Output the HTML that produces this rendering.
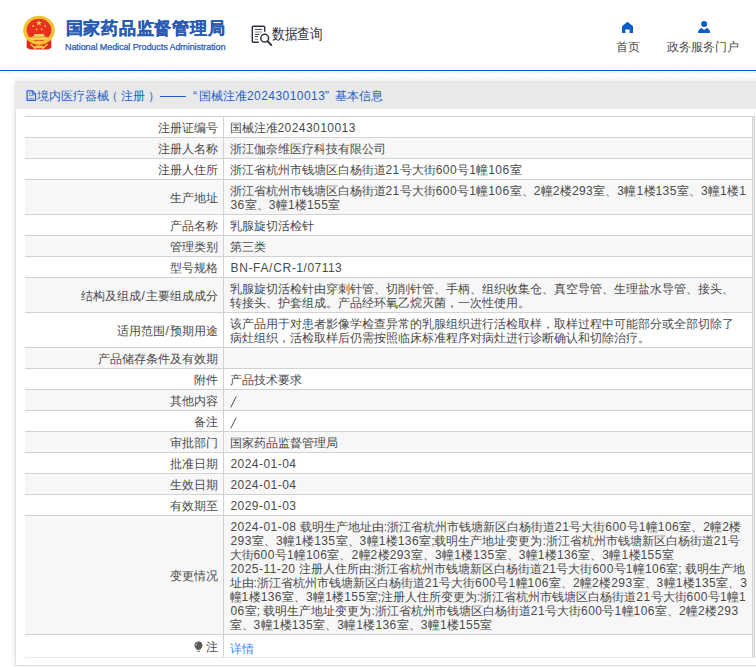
<!DOCTYPE html>
<html><head><meta charset="utf-8">
<style>
*{box-sizing:border-box}
html,body{margin:0;padding:0;background:#fff;width:756px;height:667px;overflow:hidden;font-family:"Liberation Sans",sans-serif;color:#4a4a4a}
.abs{position:absolute}
i{font-style:normal;font-size:12px;letter-spacing:0}
b{font-weight:normal;letter-spacing:0.45px}
i.f{margin-left:1px}
u{text-decoration:none;letter-spacing:0.7px}
#hdr{position:absolute;left:0;top:0;width:756px;height:70px;background:#fff}
#bline{position:absolute;left:0;top:70px;width:756px;height:1px;background:#0457c0}
.title{position:absolute;left:65.5px;top:17px;font-size:17px;font-weight:bold;color:#2a5cb5;-webkit-text-stroke:0.35px #2a5cb5;letter-spacing:0.75px;white-space:nowrap;line-height:24px}
.sub{position:absolute;left:65px;top:41px;font-size:9px;color:#2a5cb5;white-space:nowrap;line-height:12px;letter-spacing:-0.08px;-webkit-text-stroke:0.25px #2a5cb5}
.navq{position:absolute;left:272px;top:25px;font-size:15px;color:#2e2e3a;white-space:nowrap;line-height:18px;letter-spacing:0;transform-origin:0 0;transform:scaleX(0.84)}
.navt{position:absolute;font-size:12px;color:#4a4a4a;white-space:nowrap;line-height:14px}
#panel{position:absolute;left:15px;top:81px;width:760px;height:585px;background:#fff;box-shadow:0 0 6px rgba(0,0,0,0.12);border-left:1px solid #e2e2e2;border-bottom:1px solid #e2e2e2}
#ph{position:absolute;left:15px;top:81px;width:741px;height:28px;background:#e9e9e9;border-bottom:1px solid #e6eaf2}
.pt{position:absolute;top:88px;font-size:12px;letter-spacing:0;color:#1f5fc4;white-space:nowrap;line-height:16px}
table{position:absolute;left:25px;top:116px;width:728px;border-collapse:collapse;table-layout:fixed;font-size:12px;letter-spacing:0;color:#4a4a4a}
td{border:1px solid #d2d2d2;padding:4px 7px 2px 6px;line-height:14px;height:21px;white-space:nowrap;vertical-align:middle}
td.l{text-align:right;padding-right:5px;border-left:none}
tr:nth-child(even) td{background:#f7f7f7}
tr.last td{height:23px;border-bottom-color:#e6eaf2}
.lnk{color:#3388ff;position:relative;top:2px}
#outr{position:absolute;left:753px;top:116px;width:2px;height:542px;background:#e9edf5;border-right:1px solid #d0d0d0;border-top:1px solid #d2d2d2}
</style></head><body>
<div id="hdr">
  <svg class="abs" style="left:15px;top:10px" width="50" height="45" viewBox="0 0 50 45">
    <path d="M11.8 29 L11.6 37.5 Q14 40 18 39.4 L30 39.4 Q34 40 36.4 37.5 L36.2 29 Z" fill="#e2261c"/>
    <ellipse cx="24" cy="20.2" rx="15.8" ry="14.5" fill="#f2c232"/>
    <ellipse cx="24" cy="20" rx="12.3" ry="11.2" fill="#e8321f"/>
    <polygon points="24,9.9 24.75,12.1 27.1,12.1 25.2,13.5 25.9,15.7 24,14.3 22.1,15.7 22.8,13.5 20.9,12.1 23.25,12.1" fill="#f4d04a"/>
    <circle cx="18.1" cy="15.9" r="0.9" fill="#f4d04a"/><circle cx="30.1" cy="15.9" r="0.9" fill="#f4d04a"/>
    <circle cx="21.6" cy="19.3" r="0.9" fill="#f4d04a"/><circle cx="26.7" cy="19.3" r="0.9" fill="#f4d04a"/>
    <rect x="19" y="24.1" width="10" height="2" fill="#f6da6a"/>
    <rect x="17.5" y="26.1" width="13" height="1.2" fill="#f0c040"/>
    <rect x="14.8" y="27.3" width="18.4" height="2.6" fill="#f6d650"/>
    <path d="M12.5 28.5 Q24 37.5 35.5 28.5" fill="none" stroke="#f2c232" stroke-width="2.2"/>
    <ellipse cx="24" cy="32.3" rx="3.2" ry="1.9" fill="#f2c640"/>
    <path d="M15.5 34 L20.5 38.8 M32.5 34 L27.5 38.8" stroke="#f2cc40" stroke-width="1.6"/>
    <ellipse cx="24" cy="36.8" rx="4.6" ry="1.5" fill="#f4cc3c"/>
  </svg>
  <div class="title">国家药品监督管理局</div>
  <div class="sub">National Medical Products Administration</div>
  <svg class="abs" style="left:250px;top:24px" width="24" height="24" viewBox="0 0 24 24">
    <path d="M8.8 18.3 H3.3 Q2.3 18.3 2.3 17.3 V3.3 Q2.3 2.3 3.3 2.3 H13.7 Q14.7 2.3 14.7 3.3 V7.8" fill="none" stroke="#2f2f3d" stroke-width="1.4"/>
    <path d="M5 5.4 H12.2" stroke="#3a3a48" stroke-width="1"/>
    <path d="M5 8 H12.2" stroke="#8a8a94" stroke-width="1"/>
    <path d="M5 10.4 H9.5" stroke="#3a3a48" stroke-width="1"/>
    <path d="M5 12.6 H8" stroke="#3a3a48" stroke-width="1"/>
    <path d="M5 15.4 H8" stroke="#8a8a94" stroke-width="1"/>
    <circle cx="14.7" cy="14.2" r="3.9" fill="#fff" stroke="#2f2f3d" stroke-width="1.5"/>
    <path d="M17.5 17.2 L21.3 21" stroke="#2f2f3d" stroke-width="1.9" stroke-linecap="round"/>
  </svg>
  <div class="navq">数据查询</div>
  <svg class="abs" style="left:621px;top:21px" width="13" height="13" viewBox="0 0 13 13">
    <path d="M6.5 0.8 L12 5.3 V12 H8.6 V8.4 H4.4 V12 H1 V5.3 Z" fill="#0c5ccc"/>
  </svg>
  <div class="navt" style="left:616px;top:40px">首页</div>
  <svg class="abs" style="left:697px;top:20px" width="14" height="14" viewBox="0 0 14 14">
    <circle cx="7.1" cy="4.05" r="3.0" fill="#0b5bc8"/>
    <path d="M1 13 Q1.2 9.2 4.4 7.9 L7.1 9.9 L9.8 7.9 Q13 9.2 13.2 13 Z" fill="#0b5bc8"/>
  </svg>
  <div class="navt" style="left:667px;top:40px">政务服务门户</div>
</div>
<div id="bline"></div>
<svg id="hatch" class="abs" style="left:0;top:72px" width="756" height="2"><defs><pattern id="hp" width="3" height="2" patternUnits="userSpaceOnUse"><rect x="2" y="0" width="1" height="1" fill="#e0e0e0"/><rect x="1" y="1" width="1" height="1" fill="#eaeaea"/></pattern></defs><rect width="756" height="2" fill="url(#hp)"/></svg>
<div id="panel"></div>
<div id="ph"></div>
<svg class="abs" style="left:22px;top:86px" width="16" height="18" viewBox="0 0 16 18">
  <path d="M5.1 4.9 H10.6 L13.5 7.8 V14.3 H5.1 Z" fill="none" stroke="#1d5fcc" stroke-width="1.15" stroke-linejoin="round"/>
  <path d="M10.3 5.2 V8.1 H13.3" fill="none" stroke="#1d5fcc" stroke-width="1"/>
  <path d="M6.8 7.4 H8.6" stroke="#1d5fcc" stroke-width="0.9"/>
  <path d="M6.8 9.6 H11.6" stroke="#6c7fd0" stroke-width="0.9"/>
  <path d="M6.8 12.4 H11.6" stroke="#6c7fd0" stroke-width="0.9"/>
</svg>
<div class="pt" style="left:37px">境内医疗器械</div>
<div class="pt" style="left:106px">（</div>
<div class="pt" style="left:121px">注册</div>
<div class="pt" style="left:148px">）</div>
<div class="abs" style="left:160px;top:96px;width:26px;height:1px;background:#1f5fc4"></div>
<div class="pt" style="left:193px">“</div>
<div class="pt" style="left:199px">国械注准<i><b>20243010013</b></i></div>
<div class="pt" style="left:325px">”</div>
<div class="pt" style="left:335px">基本信息</div>
<table><colgroup><col style="width:198px"><col></colgroup>
<tr><td class="l">注册证编号</td><td class="v">国械注准<i><b>20243010013</b></i></td></tr>
<tr><td class="l">注册人名称</td><td class="v">浙江伽奈维医疗科技有限公司</td></tr>
<tr><td class="l">注册人住所</td><td class="v">浙江省杭州市钱塘区白杨街道<i><b>21</b></i>号大街<i><b>600</b></i>号<i><b>1</b></i>幢<i><b>106</b></i>室</td></tr>
<tr><td class="l">生产地址</td><td class="v">浙江省杭州市钱塘区白杨街道<i><b>21</b></i>号大街<i><b>600</b></i>号<i><b>1</b></i>幢<i><b>106</b></i>室、<i><b>2</b></i>幢<i><b>2</b></i>楼<i><b>293</b></i>室、<i><b>3</b></i>幢<i><b>1</b></i>楼<i><b>135</b></i>室、<i><b>3</b></i>幢<i><b>1</b></i>楼<i><b>1</b></i><br><i class="f"><b>36</b></i>室、<i><b>3</b></i>幢<i><b>1</b></i>楼<i><b>155</b></i>室</td></tr>
<tr><td class="l">产品名称</td><td class="v">乳腺旋切活检针</td></tr>
<tr><td class="l">管理类别</td><td class="v">第三类</td></tr>
<tr><td class="l">型号规格</td><td class="v"><i class="f"><u>BN</u><b>-</b><u>FA/CR</u><b>-1</b><u>/</u><b>07113</b></i></td></tr>
<tr><td class="l">结构及组成<i><u>/</u></i>主要组成成分</td><td class="v">乳腺旋切活检针由穿刺针管、切削针管、手柄、组织收集仓、真空导管、生理盐水导管、接头、<br>转接头、护套组成。产品经环氧乙烷灭菌，一次性使用。</td></tr>
<tr><td class="l">适用范围<i><u>/</u></i>预期用途</td><td class="v">该产品用于对患者影像学检查异常的乳腺组织进行活检取样，取样过程中可能部分或全部切除了<br>病灶组织，活检取样后仍需按照临床标准程序对病灶进行诊断确认和切除治疗。</td></tr>
<tr><td class="l">产品储存条件及有效期</td><td class="v"></td></tr>
<tr><td class="l">附件</td><td class="v">产品技术要求</td></tr>
<tr><td class="l">其他内容</td><td class="v"><svg width="7" height="12" viewBox="0 0 7 12" style="display:block;margin:2px 0 0 0.5px"><path d="M6.2 0.6 L0.8 11.4" stroke="#505050" stroke-width="1.0"/></svg></td></tr>
<tr><td class="l">备注</td><td class="v"><svg width="7" height="12" viewBox="0 0 7 12" style="display:block;margin:2px 0 0 0.5px"><path d="M6.2 0.6 L0.8 11.4" stroke="#505050" stroke-width="1.0"/></svg></td></tr>
<tr><td class="l">审批部门</td><td class="v">国家药品监督管理局</td></tr>
<tr><td class="l">批准日期</td><td class="v"><i class="f"><b>2024-01-04</b></i></td></tr>
<tr><td class="l">生效日期</td><td class="v"><i class="f"><b>2024-01-04</b></i></td></tr>
<tr><td class="l">有效期至</td><td class="v"><i class="f"><b>2029-01-03</b></i></td></tr>
<tr><td class="l">变更情况</td><td class="v"><i class="f"><b>2024-01-08</b> </i>载明生产地址由<i>:</i>浙江省杭州市钱塘新区白杨街道<i><b>21</b></i>号大街<i><b>600</b></i>号<i><b>1</b></i>幢<i><b>106</b></i>室、<i><b>2</b></i>幢<i><b>2</b></i>楼<br><i class="f"><b>293</b></i>室、<i><b>3</b></i>幢<i><b>1</b></i>楼<i><b>135</b></i>室、<i><b>3</b></i>幢<i><b>1</b></i>楼<i><b>136</b></i>室<i>;</i>载明生产地址变更为<i>:</i>浙江省杭州市钱塘新区白杨街道<i><b>21</b></i>号<br>大街<i><b>600</b></i>号<i><b>1</b></i>幢<i><b>106</b></i>室、<i><b>2</b></i>幢<i><b>2</b></i>楼<i><b>293</b></i>室、<i><b>3</b></i>幢<i><b>1</b></i>楼<i><b>135</b></i>室、<i><b>3</b></i>幢<i><b>1</b></i>楼<i><b>136</b></i>室、<i><b>3</b></i>幢<i><b>1</b></i>楼<i><b>155</b></i>室<br><i class="f"><b>2025-11-20</b> </i>注册人住所由<i>:</i>浙江省杭州市钱塘新区白杨街道<i><b>21</b></i>号大街<i><b>600</b></i>号<i><b>1</b></i>幢<i><b>106</b></i>室<i>; </i>载明生产地<br>址由<i>:</i>浙江省杭州市钱塘新区白杨街道<i><b>21</b></i>号大街<i><b>600</b></i>号<i><b>1</b></i>幢<i><b>106</b></i>室、<i><b>2</b></i>幢<i><b>2</b></i>楼<i><b>293</b></i>室、<i><b>3</b></i>幢<i><b>1</b></i>楼<i><b>135</b></i>室、<i><b>3</b></i><br>幢<i><b>1</b></i>楼<i><b>136</b></i>室、<i><b>3</b></i>幢<i><b>1</b></i>楼<i><b>155</b></i>室<i>;</i>注册人住所变更为<i>:</i>浙江省杭州市钱塘区白杨街道<i><b>21</b></i>号大街<i><b>600</b></i>号<i><b>1</b></i>幢<i><b>1</b></i><br><i class="f"><b>06</b></i>室<i>; </i>载明生产地址变更为<i>:</i>浙江省杭州市钱塘区白杨街道<i><b>21</b></i>号大街<i><b>600</b></i>号<i><b>1</b></i>幢<i><b>106</b></i>室、<i><b>2</b></i>幢<i><b>2</b></i>楼<i><b>293</b></i><br>室、<i><b>3</b></i>幢<i><b>1</b></i>楼<i><b>135</b></i>室、<i><b>3</b></i>幢<i><b>1</b></i>楼<i><b>136</b></i>室、<i><b>3</b></i>幢<i><b>1</b></i>楼<i><b>155</b></i>室</td></tr>
<tr class="last"><td class="l"><svg width="9" height="11" viewBox="0 0 9 11" style="vertical-align:-1px;margin-right:2.8px"><path d="M4.5 0.4 C2.2 0.4 0.5 2.1 0.5 4.3 C0.5 5.9 1.3 6.9 2.1 7.8 L2.6 8.7 L6.4 8.7 L6.9 7.8 C7.7 6.9 8.5 5.9 8.5 4.3 C8.5 2.1 6.8 0.4 4.5 0.4Z" fill="#585858"/><rect x="2.9" y="9.8" width="3.2" height="0.9" fill="#606060"/><path d="M1.9 5.2 Q2 3 3.9 1.8" stroke="#d8d8d8" stroke-width="0.8" fill="none"/></svg>注</td><td class="v"><span class="lnk">详情</span></td></tr>
</table>
<div id="outr"></div>
</body></html>
